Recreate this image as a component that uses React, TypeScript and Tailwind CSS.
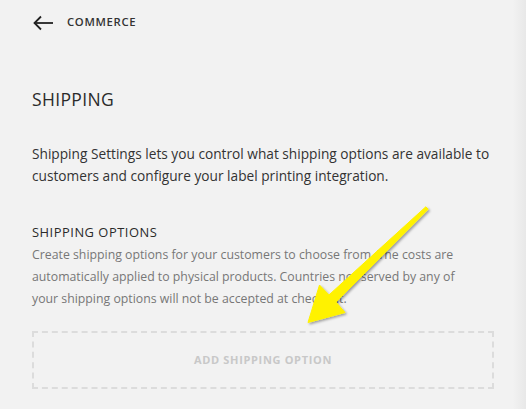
import React from 'react'

function BackArrow() {
  return (
    <svg width="22" height="16" viewBox="0 0 22 16" fill="none" stroke="#222" strokeWidth="1.8">
      <path d="M21 8H2.5" />
      <path d="M9 1.5L2.5 8L9 14.5" />
    </svg>
  )
}

function Pointer() {
  return (
    <svg className="pointer-events-none absolute inset-0" width="526" height="409" viewBox="0 0 526 409">
      <defs>
        <filter id="sh" x="-20%" y="-20%" width="140%" height="140%">
          <feDropShadow dx="1.5" dy="1.5" stdDeviation="1.2" floodColor="#000" floodOpacity="0.35" />
        </filter>
      </defs>
      <polygon
        filter="url(#sh)"
        fill="#fff200"
        points="428.2,209.2 336,302.1 345,312.5 308,322.5 319.5,285 329,294.9 425.8,206.8"
        strokeLinejoin="round"
        stroke="#fff200"
        strokeWidth="1"
      />
    </svg>
  )
}

export default function App() {
  return (
    <div
      className="relative h-[409px] w-[526px] overflow-hidden bg-[linear-gradient(to_right,#f2f2f2_97.5%,#e8e8e8)] px-8 text-[#333]"
      style={{ fontFamily: '"Open Sans", "Noto Sans", sans-serif' }}
    >
      <div className="flex h-[45px] items-center gap-[13px]">
        <BackArrow />
        <span className="text-[11.3px] font-semibold tracking-[0.06em] text-[#333]">COMMERCE</span>
      </div>

      <h1 className="mt-[44px] text-[17.5px] font-normal leading-5 tracking-[0.02em] text-[#2a2a2a]">SHIPPING</h1>

      <p className="mt-[34px] text-[13.7px] leading-[22px] text-[#333]">
        Shipping Settings lets you control what shipping options are available to customers and configure your label
        printing integration.
      </p>

      <h2 className="mt-[35px] text-[12.9px] font-normal leading-5 tracking-[0.04em] text-[#2a2a2a]">SHIPPING OPTIONS</h2>
      <p className="mt-[2px] w-[450px] text-[12.3px] leading-[22px] text-[#777]">
        Create shipping options for your customers to choose from. The costs are automatically applied to physical
        products. Countries not served by any of your shipping options will not be accepted at checkout.
      </p>

      <div className="mt-[21px] flex h-[58px] w-[462px] items-center justify-center border-2 border-dashed border-[#dcdcdc]">
        <span className="text-[11px] font-bold tracking-[0.06em] text-[#c8c8c8]">ADD SHIPPING OPTION</span>
      </div>

      <Pointer />
    </div>
  )
}
